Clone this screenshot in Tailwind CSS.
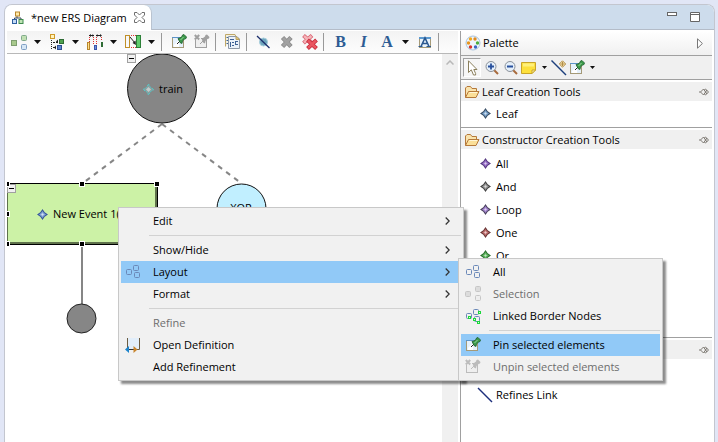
<!DOCTYPE html>
<html lang="en">
<head>
<meta charset="utf-8">
<title>new ERS Diagram</title>
<script src="https://cdn.jsdelivr.net/npm/@tailwindcss/browser@4"></script>
</head>
<body class="bg-[#e1e6f6] font-['Open_Sans','Noto_Sans',sans-serif] text-[11px] leading-4 text-black">

<svg class="hidden" aria-hidden="true">
  <defs>
    <linearGradient id="gy" x1="0" y1="0" x2="0" y2="1"><stop offset="0" stop-color="#fffbd0"/><stop offset="1" stop-color="#f6d264"/></linearGradient>
    <linearGradient id="gb" x1="0" y1="0" x2="0" y2="1"><stop offset="0" stop-color="#f2f8ff"/><stop offset="1" stop-color="#a9c4e8"/></linearGradient>
  </defs>
  <symbol id="caret" viewBox="0 0 7 4"><path d="M0 0H7L3.5 4Z" fill="#111"/></symbol>
  <symbol id="star" viewBox="0 0 11 11">
    <path d="M5.5 0L7.700 3.300L11 5.500L7.700 7.700L5.500 11L3.300 7.700L0 5.500L3.300 3.300Z" fill="currentColor"/>
    <path d="M5.500 2L7 4L9 5.500L7 7L5.500 9L4 7L2 5.500L4 4Z"/>
    <path d="M5.500 4V7M4 5.500H7" stroke="#fff" stroke-opacity=".4"/>
  </symbol>
  <symbol id="boxes" viewBox="0 0 16 16">
    <g fill="url(#gb)" stroke="#6a88b8"><rect x="1.500" y="5.500" width="5" height="5" rx="1"/><rect x="8.500" y="1.500" width="5" height="5" rx="1"/><rect x="9.500" y="8.500" width="5" height="5" rx="1"/></g>
  </symbol>
  <symbol id="boxes-off" viewBox="0 0 16 16">
    <g fill="#dcdcdc" stroke="#c6c6c6"><rect x=".5" y="5.500" width="5" height="5" rx="1"/><rect x="10.500" y=".5" width="5" height="5" rx="1"/><rect x="10.500" y="9.500" width="5" height="5" rx="1" fill="#eee"/></g>
  </symbol>
  <symbol id="pin" viewBox="0 0 16 16">
    <rect x="1.500" y="3.500" width="11" height="10" fill="#e6f1fb" stroke="#a59a78"/>
    <path d="M1 3.500H9" stroke="#5d94c8"/><path d="M3 11L8 6V13H3Z" fill="#fff"/>
    <path d="M6 10L9 7" stroke="#222"/>
    <path d="M7 4.500L9 4L11 2.500L11.500 1L13 .5L15.500 3L15 4.500L13.500 5L11.500 7L11 9.500L9 8.500Z" fill="#3c9a4a" stroke="#1c5c2c" stroke-width=".8"/>
    <path d="M9.500 6L12.500 3" stroke="#9bd79f"/>
  </symbol>
  <symbol id="unpin" viewBox="0 0 16 16">
    <rect x="1.500" y="4.500" width="11" height="9" fill="#efefef" stroke="currentColor"/>
    <path d="M0 0H7V6H0Z" fill="#f3f3f3"/>
    <path d="M.8 1L5.200 5.500M5.200 1L.8 5.500" stroke="currentColor" stroke-width="2"/>
    <path d="M6 10L9 7" stroke="currentColor"/>
    <path d="M7.500 4.500L9 4L11 2.500L11.500 1L13 .5L15.500 3L15 4.500L13.500 5L11.500 7L11 9.500L9 8.500Z" fill="currentColor"/>
  </symbol>
  <symbol id="folder" viewBox="0 0 16 14">
    <path d="M1.500 12.500V3L3 1.500H6.500L8 3.500H12.500V6" fill="#f9e3ad" stroke="#b5793a"/>
    <path d="M1.500 12.500L4.500 6.500H15L12 12.500Z" fill="#fbdf98" stroke="#b5793a"/>
    <path d="M5.500 7.500H13" stroke="#fff6d8"/>
  </symbol>
  <symbol id="pushpin" viewBox="0 0 10 8">
    <path d="M0 4H1.500M1.500 4L4.500 1L8 6M1.500 4L4.500 7L8 2M5.500 1.500L6.500 1L9.500 4L6.500 7L5.500 6.500" fill="none" stroke="#6e6a62" stroke-width=".9"/>
  </symbol>
  <symbol id="minus" viewBox="0 0 9 9">
    <rect x=".5" y=".5" width="8" height="8" fill="#f0f0f0" stroke="#a0a0a0"/><path d="M2 4.500H7" stroke="#000"/>
  </symbol>
</svg>

<div class="relative flex h-screen flex-col overflow-hidden pt-1 pr-[3px] pl-1">
  <div class="flex min-h-0 flex-1 flex-col overflow-hidden rounded-t-lg border border-b-0 border-[#c3c6cf] bg-white">

    <!-- Editor tab strip -->
    <header class="flex h-[25px] shrink-0 items-stretch justify-between border-b border-[#b4bcc8] bg-[#cddcec]">
      <div class="-mb-px flex items-center gap-[7px] rounded-tr-lg border-r border-[#b9c3d0] bg-white px-[6px]">
        <svg class="size-[13px]" viewBox="0 0 13 13">
          <path d="M6 5V7M3.500 8.500V7H10V8.500" fill="none" stroke="#3c4a5c"/>
          <rect x="4.500" y="1" width="4" height="4" fill="#ffe9a8" stroke="#b8862c"/>
          <rect x="1.500" y="8.500" width="4" height="4" fill="#c5daf5" stroke="#2d5fa0"/>
          <rect x="8" y="8.500" width="4" height="4" fill="#bfe3b5" stroke="#3d8a4c"/>
        </svg>
        <span>*new ERS Diagram</span>
        <button type="button" aria-label="Close"><svg class="block size-[11px]" viewBox="0 0 11 11"><path d="M.5 .5H3L5.500 3L8 .5H10.500V3L8 5.500L10.500 8V10.500H8L5.500 8L3 10.500H.5V8L3 5.500L.5 3Z" fill="#fff" stroke="#6e6e6e"/></svg></button>
      </div>
      <div class="flex items-start gap-[13px] pt-[7px] pr-[14px]">
        <button type="button" aria-label="Minimize"><svg class="block h-[4px] w-[10px]" viewBox="0 0 10 4"><rect x=".5" y=".5" width="9" height="3" fill="#fff" stroke="#666"/></svg></button>
        <button type="button" aria-label="Maximize"><svg class="block size-[10px]" viewBox="0 0 10 10"><path d="M.5 .5H9.500V9.500H.5ZM.5 2.500H9.500" fill="#fff" stroke="#666"/></svg></button>
      </div>
    </header>

    <div class="flex min-h-0 flex-1 px-[2px] pt-px">
      <!-- Diagram editor -->
      <main class="flex min-w-0 flex-1 flex-col">
        <div class="flex h-[23px] shrink-0 items-center border-b border-[#b8b8b8] bg-linear-to-b from-[#f3f3f3] to-[#fdfdfd]" role="toolbar" aria-label="Diagram">
          <button type="button" aria-label="Arrange" class="flex w-[38px] items-center gap-[7px] pl-1">
            <svg class="size-4" viewBox="0 0 16 16"><rect x=".5" y="6.500" width="5" height="5" fill="#a8c98c" stroke="#7f9e70"/><rect x="10.500" y="1.500" width="5" height="5" rx="1" fill="#c0dfb2" stroke="#7fa98a"/><rect x="10.500" y="10.500" width="5" height="5" rx="1" fill="#d6e6f5" stroke="#7f9fc4"/></svg>
            <svg class="h-1 w-[7px]"><use href="#caret"/></svg>
          </button>
          <button type="button" aria-label="Align" class="flex w-[38px] items-center gap-[7px] pl-1">
            <svg class="size-4" viewBox="0 0 16 16"><rect x="1.500" y=".5" width="4" height="4" fill="#fff3bd" stroke="#d09a28"/><path d="M2.500 6V15" stroke="#222" stroke-dasharray="1 1"/><path d="M4 8.500H9M4 13.500H6" stroke="#222" stroke-dasharray="2 1"/><rect x="10.500" y="5.500" width="4" height="4" fill="#4fa24f" stroke="#2f6c35"/><rect x="8.500" y="11.500" width="4" height="4" fill="#5f86d0" stroke="#2d4f94"/><path d="M7 7.500L9 5.500V9.500ZM5 13.500L7 11.500V15.500Z" fill="#222"/></svg>
            <svg class="h-1 w-[7px]"><use href="#caret"/></svg>
          </button>
          <button type="button" aria-label="Distribute" class="flex w-[38px] items-center gap-[7px] pl-1">
            <svg class="size-4" viewBox="0 0 16 16"><path d="M2 1.500H7M9 1.500H14" stroke="#222"/><path d="M2 1.500L4 0V3ZM7 1.500L5.500 0V3ZM9 1.500L10.500 0V3ZM15 1.500L13 0V3Z" fill="#222"/><path d="M2.500 3V8M6.500 3V10M9.500 3V10M14.500 3V7" stroke="#e03030" stroke-dasharray="1 1"/><rect x=".5" y="8.500" width="2" height="7" fill="#ffe08a" stroke="#b8862c"/><rect x="7.500" y="11.500" width="2" height="4" fill="#6e8fe0" stroke="#3a55a8"/><rect x="14.500" y="8.500" width="1" height="4" fill="#58a858" stroke="#2f6c35"/></svg>
            <svg class="h-1 w-[7px]"><use href="#caret"/></svg>
          </button>
          <button type="button" aria-label="Match size" class="flex w-[38px] items-center gap-[7px] pl-1">
            <svg class="size-4" viewBox="0 0 16 16"><rect x=".5" y="1.500" width="4" height="12" fill="url(#gy)" stroke="#c08f28"/><rect x="11.500" y="1.500" width="4" height="12" fill="#5fcc6c" stroke="#2c8038"/><path d="M6 1.500H11M6 13.500H11" stroke="#e03030" stroke-dasharray="1 1"/><path d="M5 3L10 9" stroke="#222"/><path d="M11 11L7.500 9L10.500 6.500Z" fill="#222"/></svg>
            <svg class="h-1 w-[7px]"><use href="#caret"/></svg>
          </button>
          <div class="flex h-[18px] w-2 pl-[2px]"><div class="w-px bg-[#999]"></div></div>
          <button type="button" aria-label="Pin selected elements" class="flex w-[23px] justify-center"><svg class="size-4"><use href="#pin"/></svg></button>
          <button type="button" aria-label="Unpin selected elements" class="flex w-[23px] justify-center text-[#a0a0a0]"><svg class="size-4"><use href="#unpin"/></svg></button>
          <div class="flex h-[18px] w-2 pl-[2px]"><div class="w-px bg-[#999]"></div></div>
          <button type="button" aria-label="Copy layout" class="flex w-[23px] justify-center">
            <svg class="size-4" viewBox="0 0 16 16"><path d="M.5 12.500V.5H10L11 3" fill="#f4f1e0" stroke="#c0a868"/><path d="M3.500 2.500H12L14.500 5V14.500H3.500Z" fill="#eaf1fa" stroke="#8e99a8"/><path d="M11 2.500V5.500H14.500Z" fill="#f3d37c" stroke="#b8a060"/><path d="M1.500 3.500H3M5 5.500H9M1.500 6.500H3M1.500 9.500H3M7 8.500H9M11 7.500H13M5.500 8V13M7 11.500H9M11 10.500H13M10.500 7V11" stroke="#3f6296" fill="none"/></svg>
          </button>
          <div class="flex h-[18px] w-2 pl-[2px]"><div class="w-px bg-[#999]"></div></div>
          <button type="button" aria-label="Hide element" class="flex w-[23px] justify-center">
            <svg class="size-4" viewBox="0 0 16 16"><circle cx="7.500" cy="8" r="4" fill="#6ea5bd" stroke="#a8cfdc"/><path d="M1 2L13.500 14" stroke="#1c2f6c" stroke-width="1.300"/></svg>
          </button>
          <button type="button" aria-label="Delete from diagram" class="flex w-[23px] justify-center">
            <svg class="size-4" viewBox="0 0 16 16"><path d="M3.500 3.500L12 12.500M12 3.500L3.500 12.500" stroke="#8a8a8a" stroke-width="4.500"/><path d="M4 4L11.500 12M11.500 4L4 12" stroke="#a2a2a2" stroke-width="3"/></svg>
          </button>
          <button type="button" aria-label="Delete from model" class="flex w-[23px] justify-center">
            <svg class="size-4" viewBox="0 0 16 16"><path d="M1.500 1.500L10 9M10 1.500L1.500 9" stroke="#d86070" stroke-width="4"/><path d="M2 2L9.500 8.500M9.500 2L2 8.500" stroke="#f5b4b8" stroke-width="2.500"/><path d="M5.500 6L14.500 14.500M14.500 6L5.500 14.500" stroke="#c42838" stroke-width="4"/><path d="M6 6.500L14 14M14 6.500L6 14" stroke="#ea5560" stroke-width="2.500"/></svg>
          </button>
          <div class="flex h-[18px] w-2 pl-[2px]"><div class="w-px bg-[#999]"></div></div>
          <button type="button" class="w-[23px] text-center font-['Liberation_Serif',serif] text-[16px] leading-4 font-bold text-[#2e5c94]">B</button>
          <button type="button" class="w-[23px] text-center font-['Liberation_Serif',serif] text-[16px] leading-4 font-bold text-[#2e5c94] italic">I</button>
          <button type="button" class="flex w-[38px] items-center gap-[7px] pl-1 font-['Liberation_Serif',serif] text-[16px] leading-4 font-bold text-[#2e5c94]">
            <span class="w-4 text-center">A</span>
            <svg class="h-1 w-[7px]"><use href="#caret"/></svg>
          </button>
          <button type="button" aria-label="Font" class="flex w-[23px] justify-center">
            <svg class="size-4" viewBox="0 0 16 16"><rect x="2.500" y="3.500" width="11" height="10" fill="#e8f3fc" stroke="#a59a78"/><path d="M2 4H14" stroke="#5d9ad0" stroke-width="2"/><path d="M4 12.500L8 4L12 12.500M5.500 9.500H10.500" fill="none" stroke="#2a5890" stroke-width="1.600"/><path d="M1.500 12.500H5.500M9.500 12.500H14" stroke="#2a5890"/></svg>
          </button>
          <div class="flex h-[18px] w-2 pl-[2px]"><div class="w-px bg-[#999]"></div></div>
        </div>

        <div class="flex min-h-0 flex-1">
          <div class="relative min-w-0 flex-1 overflow-hidden">
            <svg class="absolute top-0 left-0 h-[388px] w-[435px]" viewBox="7 54 435 388" font-size="11">
              <g stroke="#868686" stroke-width="2" stroke-dasharray="5 5" fill="none"><path d="M162 124L83 183"/><path d="M162 124L241 183"/></g>
              <circle cx="162" cy="88.500" r="34.500" fill="#868686" stroke="#111"/>
              <path d="M148.500 84L150.500 87.500L154 89.500L150.500 91.500L148.500 95L146.500 91.500L143 89.500L146.500 87.500Z" fill="#8c9c9c" stroke="#40dcdc" stroke-dasharray="1 1"/>
              <path d="M148.500 87L151 89.500L148.500 92L146 89.500Z" fill="#c2cccc"/>
              <text x="159" y="93">train</text>
              <use href="#minus" x="127" y="54" width="9" height="9"/>

              <rect x="7" y="183" width="151" height="62" fill="#000"/>
              <rect x="7" y="184" width="150" height="60" fill="#5f714c"/>
              <rect x="8" y="184" width="147" height="58" fill="#ccf2a6"/>
              <use href="#minus" x="7" y="184" width="9" height="9"/>
              <use href="#star" x="37" y="209" width="11" height="11" class="fill-[#86a8d8] text-[#38589c]"/>
              <text x="53" y="218">New Event 1(</text>
              <g stroke="#fff"><rect x="79.500" y="181.500" width="5" height="5"/><rect x="154.500" y="181.500" width="5" height="5"/><rect x="79.500" y="241.500" width="5" height="5"/><rect x="4.500" y="181.500" width="5" height="5"/><rect x="4.500" y="211.500" width="5" height="5"/><rect x="4.500" y="241.500" width="5" height="5"/></g>

              <path d="M82 247V304" stroke="#868686" stroke-width="2"/>
              <circle cx="81.500" cy="318.500" r="14.500" fill="#868686" stroke="#222"/>
              <circle cx="241.500" cy="208.500" r="24.500" fill="#c1efff" stroke="#111"/>
              <text x="241" y="212" text-anchor="middle">XOR</text>
            </svg>
          </div>
          <div class="flex w-4 justify-center bg-[#f0f0f0] pt-[6px]">
            <svg class="h-[5px] w-[8px]" viewBox="0 0 8 5"><path d="M.5 4.500L4 1L7.500 4.500" fill="none" stroke="#b8b8b8" stroke-width="1.500"/></svg>
          </div>
        </div>
      </main>

      <!-- Palette -->
      <aside class="ml-[2px] flex w-[252px] shrink-0 flex-col border-l border-[#a0a0a0]">
        <div class="flex h-[25px] shrink-0 items-center border-b border-[#a0a0a0] bg-linear-to-b from-white to-[#f0f0f0] pr-[9px] pl-1">
          <svg class="size-4" viewBox="0 0 16 16"><circle cx="8" cy="8" r="7" fill="#eef5fb" stroke="#a9c3dc"/><circle cx="5.500" cy="4" r="1.700" fill="#f2a81c"/><circle cx="10" cy="4" r="1.700" fill="#e08a20"/><circle cx="3.500" cy="8" r="1.700" fill="#e8951c"/><circle cx="12.500" cy="8" r="1.700" fill="#4cae3c"/><circle cx="5.500" cy="12" r="1.700" fill="#d8342c"/><circle cx="10.500" cy="12" r="1.700" fill="#3c68c4"/></svg>
          <h2 class="flex-1 pl-[2px]">Palette</h2>
          <button type="button" aria-label="Collapse palette"><svg class="block h-[11px] w-[6px]" viewBox="0 0 6 11"><path d="M.5 .8L5.400 5.500L.5 10.200Z" fill="#fff" stroke="#777"/></svg></button>
        </div>
        <div class="flex h-6 shrink-0 items-center border-b border-[#a0a0a0] bg-[#f0f0f0] pl-[2px]" role="toolbar" aria-label="Palette tools">
          <button type="button" aria-label="Select" class="flex h-[19px] w-[18px] items-center justify-center border border-white border-t-[#a0a0a0] border-l-[#a0a0a0] bg-[#f6f6f6]"><svg class="size-4" viewBox="0 0 16 16"><path d="M4.500 .8V12.500L7.300 9.800L9.500 15H11.600V13.500L9.800 9.500H13Z" fill="#fff" stroke="#8a7f5c"/></svg></button>
          <button type="button" aria-label="Zoom in" class="ml-px flex w-[19px] justify-center"><svg class="size-4" viewBox="0 0 16 16"><path d="M10 10L14 14" stroke="#a86a3c" stroke-width="2"/><circle cx="7" cy="6.500" r="5" fill="#e4effa" stroke="#8a9098"/><path d="M4 6.500H10M7 3.500V9.500" stroke="#28509c" stroke-width="1.800"/></svg></button>
          <button type="button" aria-label="Zoom out" class="flex w-[19px] justify-center"><svg class="size-4" viewBox="0 0 16 16"><path d="M10 10L14 14" stroke="#a86a3c" stroke-width="2"/><circle cx="7" cy="6.500" r="5" fill="#e4effa" stroke="#8a9098"/><path d="M4 6.500H10" stroke="#28509c" stroke-width="1.800"/></svg></button>
          <button type="button" aria-label="Note" class="flex w-[29px] items-center gap-[5px] pl-px"><svg class="size-4 shrink-0" viewBox="0 0 16 16"><path d="M.5 2.500H14.500V10L11 13.500H.5Z" fill="#fde03c" stroke="#c8a428"/><path d="M14.500 10H11V13.500Z" fill="#fff6b0" stroke="#c8a428"/><path d="M2 5H13" stroke="#fff07c" stroke-width="3"/></svg><svg class="h-[3px] w-[5px] shrink-0"><use href="#caret"/></svg></button>
          <button type="button" aria-label="Link" class="flex w-[19px] justify-center"><svg class="size-4" viewBox="0 0 16 16"><path d="M.5 .5L15 15" stroke="#1c3f7c" stroke-width="1.400"/><path d="M11.500 .8L14.700 4L11.500 7.200L8.300 4Z" fill="#fbe8b4" stroke="#b08c48"/><path d="M11.500 2V6M9.500 4H13.500" stroke="#b08c48"/></svg></button>
          <button type="button" aria-label="Pin" class="flex w-[29px] items-center gap-[5px] pl-px"><svg class="size-4 shrink-0"><use href="#pin"/></svg><svg class="h-[3px] w-[5px] shrink-0"><use href="#caret"/></svg></button>
        </div>

        <section class="border-b border-[#a0a0a0] pt-[2px] pb-[2px]">
          <div class="flex h-[19px] items-center bg-[#f0f0f0] px-[3px]"><svg class="h-[14px] w-4"><use href="#folder"/></svg><h3 class="flex-1 pl-[2px]">Leaf Creation Tools</h3><button type="button" aria-label="Pin open"><svg class="block h-2 w-[10px]"><use href="#pushpin"/></svg></button></div>
          <button type="button" class="mt-px flex h-[23px] w-full items-center gap-[5px] pl-[19px]"><svg class="size-[11px] fill-[#7ba3cc] text-[#3a4f66]"><use href="#star"/></svg>Leaf</button>
        </section>
        <section class="border-b border-[#a0a0a0] pt-[2px] pb-[70px]">
          <div class="flex h-[19px] items-center bg-[#f0f0f0] px-[3px]"><svg class="h-[14px] w-4"><use href="#folder"/></svg><h3 class="flex-1 pl-[2px]">Constructor Creation Tools</h3><button type="button" aria-label="Pin open"><svg class="block h-2 w-[10px]"><use href="#pushpin"/></svg></button></div>
          <button type="button" class="mt-[3px] flex h-[23px] w-full items-center gap-[5px] pl-[19px]"><svg class="size-[11px] fill-[#9a72c8] text-[#563a80]"><use href="#star"/></svg>All</button>
          <button type="button" class="flex h-[23px] w-full items-center gap-[5px] pl-[19px]"><svg class="size-[11px] fill-[#9a9a9a] text-[#444]"><use href="#star"/></svg>And</button>
          <button type="button" class="flex h-[23px] w-full items-center gap-[5px] pl-[19px]"><svg class="size-[11px] fill-[#a585d0] text-[#4c4460]"><use href="#star"/></svg>Loop</button>
          <button type="button" class="flex h-[23px] w-full items-center gap-[5px] pl-[19px]"><svg class="size-[11px] fill-[#c07070] text-[#6c3838]"><use href="#star"/></svg>One</button>
          <button type="button" class="flex h-[23px] w-full items-center gap-[5px] pl-[19px]"><svg class="size-[11px] fill-[#62b862] text-[#2c7030]"><use href="#star"/></svg>Or</button>
        </section>
        <section class="pt-[2px]">
          <div class="flex h-[19px] items-center justify-end bg-[#f0f0f0] px-[3px]"><button type="button" aria-label="Pin open"><svg class="block h-2 w-[10px]"><use href="#pushpin"/></svg></button></div>
          <button type="button" class="mt-6 flex h-[23px] w-full items-center gap-[3px] pl-4"><svg class="size-4" viewBox="0 0 16 16"><path d="M1 1L15 15" stroke="#1c2f7c" stroke-width="1.400"/></svg>Refines Link</button>
        </section>
      </aside>
    </div>
  </div>

  <!-- Context menu -->
  <div role="menu" class="absolute top-[207px] left-[118px] flex w-[346px] flex-col border border-[#c8c8c8] bg-[#f1f1f1] p-[2px] shadow-[3px_3px_2px_rgba(0,0,0,0.45)]">
    <button type="button" role="menuitem" class="flex h-[22px] items-center pr-[11px] pl-8"><span class="flex-1 text-left">Edit</span><svg class="h-2 w-[5px]" viewBox="0 0 5 8"><path d="M.7 .5L4.200 4L.7 7.500" fill="none" stroke="#333" stroke-width="1.300"/></svg></button>
    <div class="my-[3px] ml-7 h-px bg-[#d2d2d2]"></div>
    <button type="button" role="menuitem" class="flex h-[22px] items-center pr-[11px] pl-8"><span class="flex-1 text-left">Show/Hide</span><svg class="h-2 w-[5px]" viewBox="0 0 5 8"><path d="M.7 .5L4.200 4L.7 7.500" fill="none" stroke="#333" stroke-width="1.300"/></svg></button>
    <button type="button" role="menuitem" class="flex h-[22px] items-center gap-3 bg-[#91c9f7] pr-[11px] pl-1"><svg class="size-4"><use href="#boxes"/></svg><span class="flex-1 text-left">Layout</span><svg class="h-2 w-[5px]" viewBox="0 0 5 8"><path d="M.7 .5L4.200 4L.7 7.500" fill="none" stroke="#333" stroke-width="1.300"/></svg></button>
    <button type="button" role="menuitem" class="flex h-[22px] items-center pr-[11px] pl-8"><span class="flex-1 text-left">Format</span><svg class="h-2 w-[5px]" viewBox="0 0 5 8"><path d="M.7 .5L4.200 4L.7 7.500" fill="none" stroke="#333" stroke-width="1.300"/></svg></button>
    <div class="my-[3px] ml-7 h-px bg-[#d2d2d2]"></div>
    <button type="button" role="menuitem" disabled class="flex h-[22px] items-center pl-8 text-[#6d6d6d]">Refine</button>
    <button type="button" role="menuitem" class="flex h-[22px] items-center gap-3 pl-1"><svg class="size-4" viewBox="0 0 16 16"><rect x="2" y="1" width="12" height="11" fill="#e2eefa"/><path d="M2.500 1V12M14.500 1V12.500H11" fill="none" stroke="#6c5c40"/><path d="M4 12.500H9" stroke="#333"/><path d="M0 12.500L4 9V16Z" fill="#1c84cc"/><path d="M12.500 12.500L8.500 9V16Z" fill="#c8842c"/></svg>Open Definition</button>
    <button type="button" role="menuitem" class="flex h-[22px] items-center pl-8">Add Refinement</button>
  </div>

  <!-- Layout submenu -->
  <div role="menu" aria-label="Layout" class="absolute top-[258px] left-[458px] flex w-[205px] flex-col border border-[#c8c8c8] bg-[#f1f1f1] p-[2px] shadow-[3px_3px_2px_rgba(0,0,0,0.45)]">
    <button type="button" role="menuitem" class="flex h-[22px] items-center gap-3 pl-1"><svg class="size-4"><use href="#boxes"/></svg>All</button>
    <button type="button" role="menuitem" disabled class="flex h-[22px] items-center gap-3 pl-1 text-[#6d6d6d]"><svg class="size-4"><use href="#boxes-off"/></svg>Selection</button>
    <button type="button" role="menuitem" class="flex h-[22px] items-center gap-3 pl-1"><svg class="size-4" viewBox="0 0 16 16"><use href="#boxes" width="16" height="16"/><g fill="#d8ffd0" stroke="#1cd83c"><rect x="3.500" y="8.500" width="2" height="2"/><rect x="13.500" y="3.500" width="2" height="2"/><rect x="8.500" y="10.500" width="2" height="2"/><rect x="12.500" y="13.500" width="2" height="2"/></g></svg>Linked Border Nodes</button>
    <div class="my-[3px] ml-7 h-px bg-[#d2d2d2]"></div>
    <button type="button" role="menuitem" class="flex h-[22px] items-center gap-3 bg-[#91c9f7] pl-1"><svg class="size-4"><use href="#pin"/></svg>Pin selected elements</button>
    <button type="button" role="menuitem" disabled class="flex h-[22px] items-center gap-3 pl-1 text-[#6d6d6d]"><svg class="size-4 text-[#bcbcbc]"><use href="#unpin"/></svg>Unpin selected elements</button>
  </div>
</div>
</body>
</html>
